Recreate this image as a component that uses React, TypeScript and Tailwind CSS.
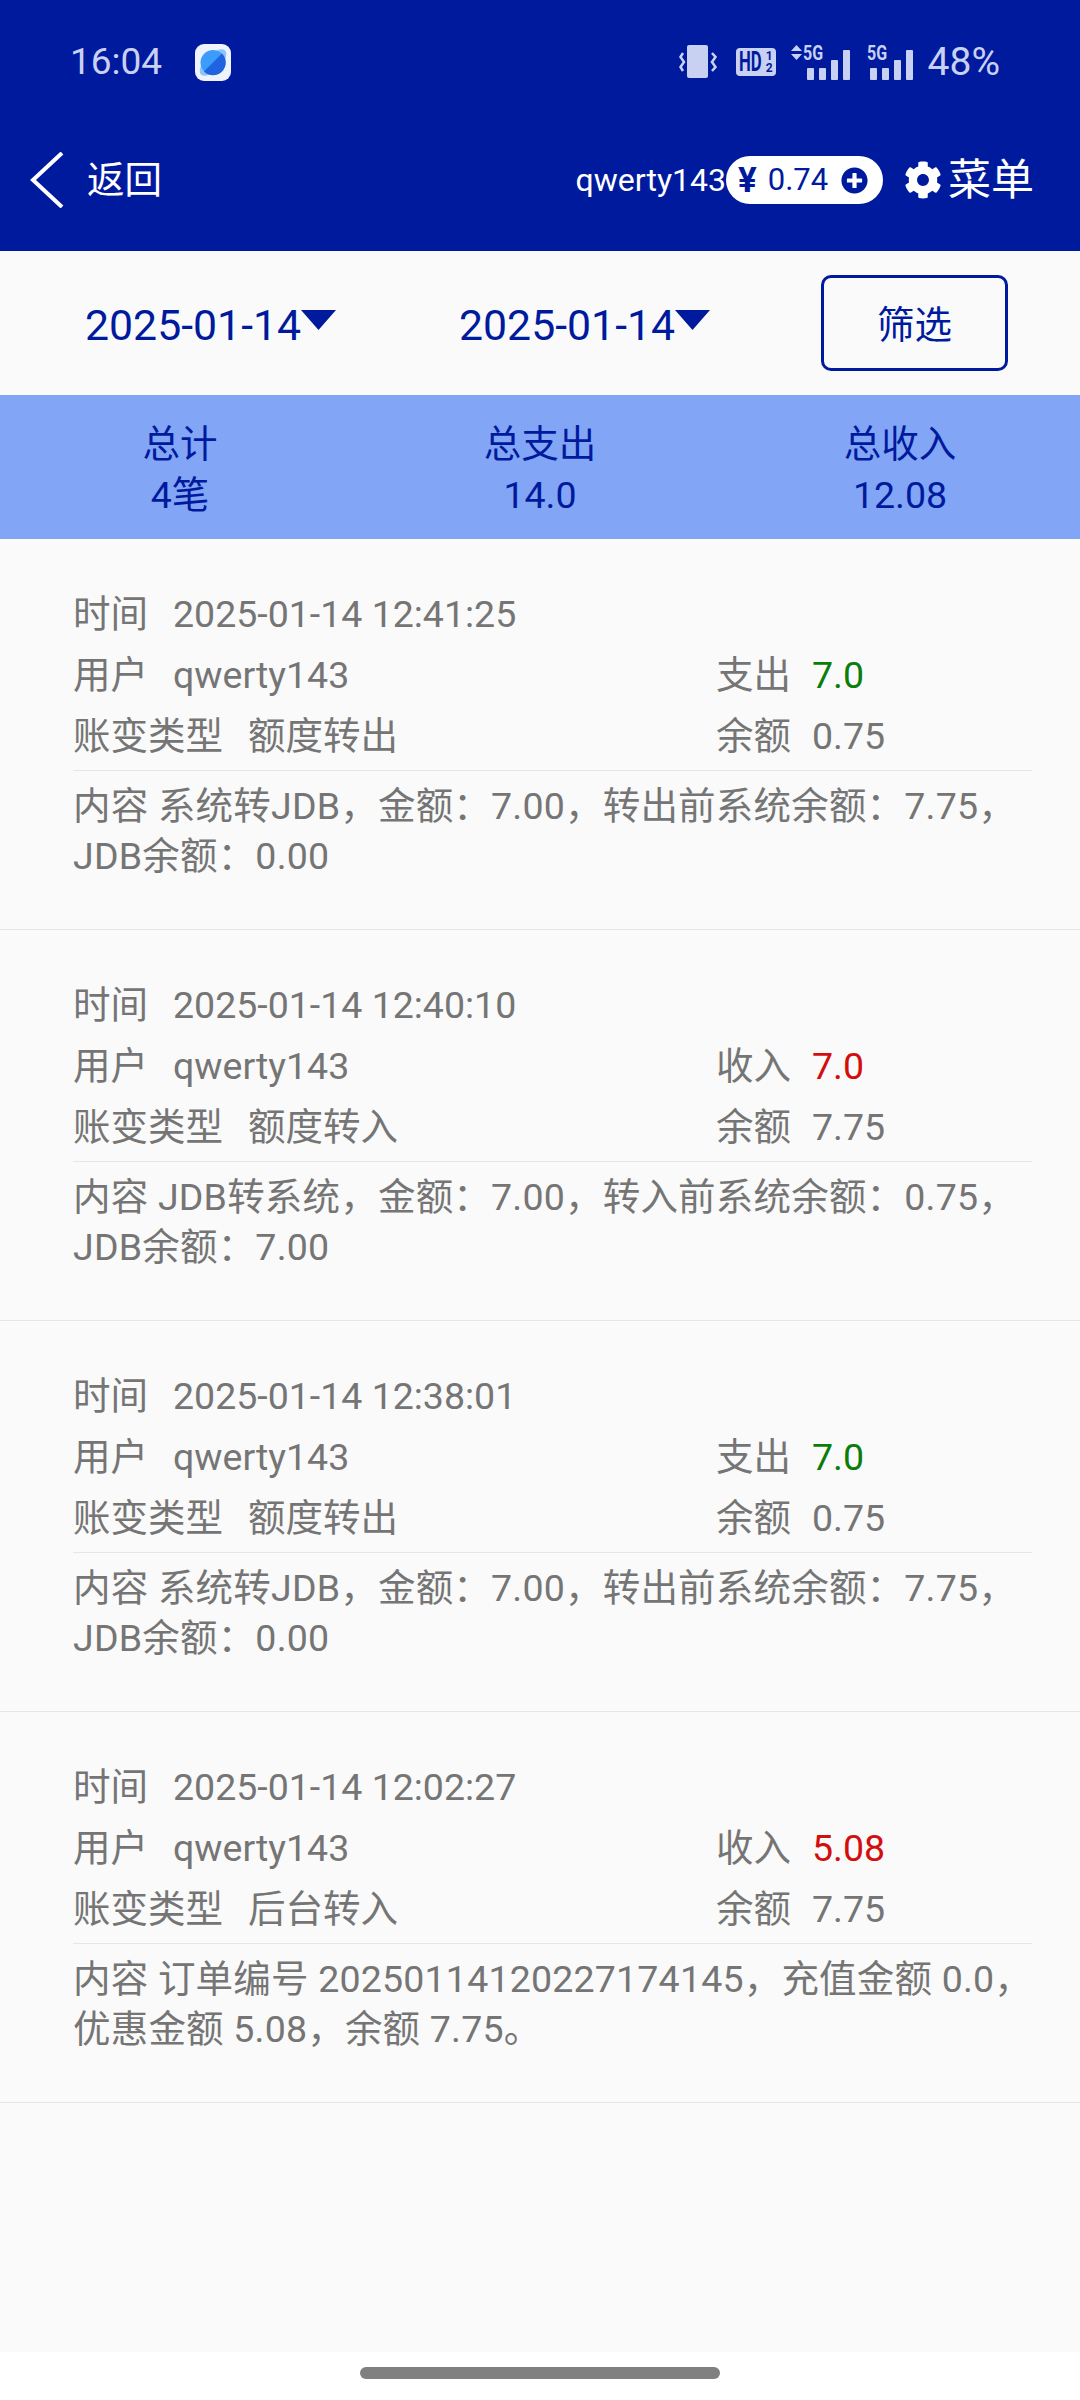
import { FaCog, FaPlusCircle } from "react-icons/fa";

interface Record {
  time: string;
  kind: string;
  amount: string;
  type: string;
  balance: string;
  lines: string[];
}

const records: Record[] = [
  {
    time: "2025-01-14 12:41:25",
    kind: "支出",
    amount: "7.0",
    type: "额度转出",
    balance: "0.75",
    lines: ["内容 系统转JDB，金额：7.00，转出前系统余额：7.75，", "JDB余额：0.00"],
  },
  {
    time: "2025-01-14 12:40:10",
    kind: "收入",
    amount: "7.0",
    type: "额度转入",
    balance: "7.75",
    lines: ["内容 JDB转系统，金额：7.00，转入前系统余额：0.75，", "JDB余额：7.00"],
  },
  {
    time: "2025-01-14 12:38:01",
    kind: "支出",
    amount: "7.0",
    type: "额度转出",
    balance: "0.75",
    lines: ["内容 系统转JDB，金额：7.00，转出前系统余额：7.75，", "JDB余额：0.00"],
  },
  {
    time: "2025-01-14 12:02:27",
    kind: "收入",
    amount: "5.08",
    type: "后台转入",
    balance: "7.75",
    lines: ["内容 订单编号 20250114120227174145，充值金额 0.0，", "优惠金额 5.08，余额 7.75。"],
  },
];

function SignalBars() {
  return (
    <div className="flex items-end gap-[5px]">
      <div className="h-[12px] w-[7px] rounded-[1px] bg-[#c9d1f3]" />
      <div className="h-[12px] w-[7px] rounded-[1px] bg-[#c9d1f3]" />
      <div className="h-[20px] w-[7px] rounded-[1px] bg-[#c9d1f3]" />
      <div className="h-[30px] w-[7px] rounded-[1px] bg-[#c9d1f3]" />
    </div>
  );
}

function StatusBar() {
  return (
    <div className="flex h-[124px] items-center pl-[70px] pr-[80px] text-[#c9d1f3]">
      <span className="w-[125px] text-[37px]">16:04</span>
      <svg width="36" height="37" viewBox="0 0 36 37">
        <rect width="36" height="37" rx="9" fill="#eef3fc" />
        <ellipse cx="18" cy="18.5" rx="17" ry="8" transform="rotate(-45 18 18.5)" fill="#8dc4fb" />
        <circle cx="18" cy="18.5" r="12.5" fill="#3b9cfb" />
        <path d="M9 27.5 L27 9.5 A12.5 12.5 0 0 1 9 27.5Z" fill="#1f63e0" />
      </svg>
      <svg className="ml-auto" width="38" height="36" viewBox="0 0 38 36">
        <rect x="8" y="1" width="21" height="33" rx="2" fill="#c9d1f3" />
        <path d="M4 9 L1.5 13 L5 18 L1.5 23 L4 27" fill="none" stroke="#c9d1f3" strokeWidth="2.5" />
        <path d="M33 9 L36.5 13 L33 18 L36.5 23 L33 27" fill="none" stroke="#c9d1f3" strokeWidth="2.5" />
      </svg>
      <div className="relative ml-[19px] h-[28px] w-[40px] rounded-[4px] bg-[#c9d1f3] font-bold text-[#001a9e]">
        <span className="absolute top-[1px] left-[3px] origin-left scale-x-[0.62] text-[27px] leading-[27px]">HD</span>
        <span className="absolute top-[2px] right-[3px] text-[12px] leading-[12px]">1</span>
        <span className="absolute right-[3px] bottom-[2px] text-[12px] leading-[12px]">2</span>
      </div>
      <div className="relative ml-[15px] flex h-[36px] w-[59px] items-end justify-end">
        <SignalBars />
        <span className="absolute -top-[1px] left-[12px] origin-left scale-x-[0.8] text-[20px] leading-[20px] font-bold">5G</span>
        <svg className="absolute top-[1px] left-0" width="11" height="15" viewBox="0 0 11 15">
          <path d="M5.5 0 L11 6 H0Z M0 9 H11 L5.5 15Z" fill="#c9d1f3" />
        </svg>
      </div>
      <div className="relative ml-[17px] flex h-[36px] w-[46px] items-end justify-end">
        <SignalBars />
        <span className="absolute -top-[1px] left-0 origin-left scale-x-[0.8] text-[20px] leading-[20px] font-bold">5G</span>
      </div>
      <span className="ml-[15px] text-[39px]">48%</span>
    </div>
  );
}

function NavBar() {
  return (
    <div className="flex h-[112px] items-center pl-[30px] pr-[46px] text-white">
      <svg width="34" height="56" viewBox="0 0 34 56">
        <path d="M32 1 L3 28 L32 55" fill="none" stroke="white" strokeWidth="4" />
      </svg>
      <span className="ml-[23px] text-[37.5px]">返回</span>
      <span className="ml-auto text-[32px]">qwerty143</span>
      <div className="flex h-[48px] w-[157px] items-center rounded-full bg-white pl-[12px] text-[31px] text-[#001a9e]">
        <span className="text-[35px] leading-none font-bold">¥</span>
        <span className="ml-[11px]">0.74</span>
        <FaPlusCircle className="ml-[13px]" size={27} />
      </div>
      <FaCog className="ml-[21px]" size={38} />
      <span className="ml-[6px] text-[43px]">菜单</span>
    </div>
  );
}

function DatePicker({ value }: { value: string }) {
  return (
    <div className="mt-[5px] flex w-[251px] items-center whitespace-nowrap text-[#001a9e]">
      <span className="text-[42.8px] leading-none">{value}</span>
      <svg className="mb-[10px] shrink-0" width="35" height="20" viewBox="0 0 35 20">
        <path d="M0 0 H35 L17.5 20Z" fill="#001a9e" />
      </svg>
    </div>
  );
}

function RecordItem({ record }: { record: Record }) {
  const amountColor = record.kind === "支出" ? "text-[#0a7d0a]" : "text-[#d40d0d]";
  return (
    <div className="h-[391px] border-b border-[#e6e6e6] pt-[45px] pl-[73px] pr-[48px] text-[37.5px] text-[#757575]">
      <div className="flex h-[61px] items-center">
        <span>时间</span>
        <span className="ml-[25px]">{record.time}</span>
      </div>
      <div className="flex h-[61px] items-center">
        <span>用户</span>
        <span className="ml-[25px]">qwerty143</span>
        <div className="absolute left-[716px] flex">
          <span>{record.kind}</span>
          <span className={`ml-[21px] ${amountColor}`}>{record.amount}</span>
        </div>
      </div>
      <div className="flex h-[61px] items-center">
        <span>账变类型</span>
        <span className="ml-[25px]">{record.type}</span>
        <div className="absolute left-[716px] flex">
          <span>余额</span>
          <span className="ml-[21px]">{record.balance}</span>
        </div>
      </div>
      <div className="mt-[3px] border-t border-[#e6e6e6] pt-[10px] leading-[50px] tracking-[0.2px] whitespace-nowrap">
        {record.lines.map((line) => (
          <div key={line}>{line}</div>
        ))}
      </div>
    </div>
  );
}

export default function App() {
  return (
    <div className="relative flex h-[2400px] w-[1080px] flex-col overflow-hidden bg-white font-['Roboto','Noto_Sans_CJK_SC',sans-serif]">
      <div className="h-[251px] bg-[#001a9e]">
        <StatusBar />
        <NavBar />
      </div>

      <div className="flex h-[144px] items-center bg-[#fafafa] pl-[85px]">
        <DatePicker value="2025-01-14" />
        <div className="w-[123px]" />
        <DatePicker value="2025-01-14" />
        <button className="ml-[111px] flex h-[96px] w-[187px] items-center justify-center rounded-[10px] border-[3px] border-[#001a9e] pt-[4px] text-[37.5px] text-[#001a9e]">
          筛选
        </button>
      </div>

      <div className="grid h-[144px] grid-cols-3 items-center bg-[#82a5f5] pt-[5px] text-center text-[37.5px] leading-[51px] text-[#001a9e]">
        <div>
          <div>总计</div>
          <div>4笔</div>
        </div>
        <div>
          <div>总支出</div>
          <div>14.0</div>
        </div>
        <div>
          <div>总收入</div>
          <div>12.08</div>
        </div>
      </div>

      <div className="flex-1 bg-[#fafafa]">
        {records.map((record) => (
          <RecordItem key={record.time} record={record} />
        ))}
      </div>

      <div className="flex h-[48px] justify-center bg-white pt-[15px]">
        <div className="h-[12px] w-[360px] rounded-full bg-[#808080]" />
      </div>
    </div>
  );
}
